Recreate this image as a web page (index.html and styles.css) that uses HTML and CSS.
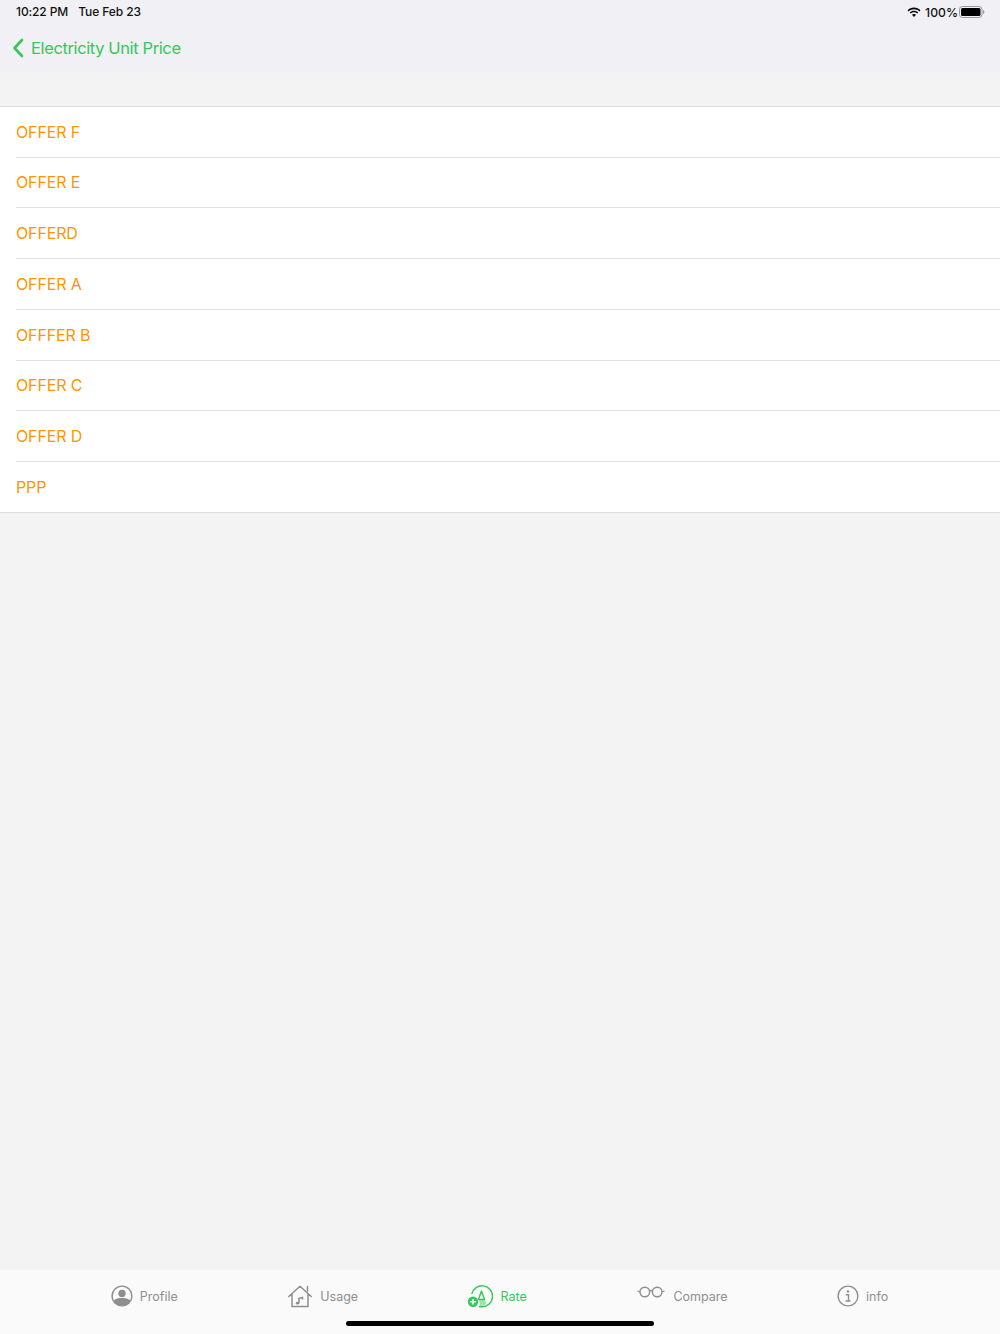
FILE: index.html
```html
<!DOCTYPE html>
<html lang="en">
<head>
<meta charset="utf-8">
<title>Electricity Unit Price</title>
<link rel="stylesheet" href="styles.css">
</head>
<body>
<div class="page">
  <header class="topbar">
    <div class="status">
      <div class="status-left"><span>10:22 PM</span><span>Tue Feb 23</span></div>
      <div class="status-right">
        <svg class="wifi" width="14" height="11" viewBox="0 0 14 11"><path d="M7 2.200c2.100 0 4 .8 5.400 2.200l1-1.100C11.700 1.500 9.400.5 7 .5S2.300 1.500.6 3.300l1 1.100C3 3 4.900 2.200 7 2.200z" fill="#000"/><path d="M7 5.300c1.200 0 2.300.5 3.200 1.300l1-1.100C10 4.300 8.600 3.700 7 3.700s-3 .6-4.200 1.800l1 1.100C4.700 5.800 5.800 5.300 7 5.300z" fill="#000"/><path d="M7 7c-.8 0-1.500.3-2 .8L7 10l2-2.200C8.500 7.300 7.800 7 7 7z" fill="#000"/></svg>
        <span class="battery-text">100%</span>
        <svg class="battery" width="26" height="12" viewBox="0 0 26 12"><rect x=".5" y=".5" width="22.500" height="11" rx="3" fill="none" stroke="#9a9a9c"/><rect x="2" y="2" width="19.500" height="8" rx="1.500" fill="#000"/><path d="M24 4v4c.8-.3 1.300-1.100 1.300-2s-.5-1.700-1.300-2z" fill="#9a9a9c"/></svg>
      </div>
    </div>
    <div class="nav">
      <svg class="chevron" width="12" height="20" viewBox="0 0 12 20"><path d="M10 2 2.500 10l7.500 8" fill="none" stroke="#34c759" stroke-width="2.600" stroke-linecap="round" stroke-linejoin="round"/></svg>
      <span class="nav-title">Electricity Unit Price</span>
    </div>
  </header>

  <main class="content">
    <ul class="list">
      <li class="row">OFFER F</li>
      <li class="row">OFFER E</li>
      <li class="row">OFFERD</li>
      <li class="row">OFFER A</li>
      <li class="row">OFFFER B</li>
      <li class="row">OFFER C</li>
      <li class="row">OFFER D</li>
      <li class="row">PPP</li>
    </ul>
  </main>

  <nav class="tabbar">
    <div class="tabs">
      <div class="tab tab-profile">
        <svg width="22" height="22" viewBox="0 0 22 22"><defs><clipPath id="pc"><circle cx="11" cy="11" r="9.800"/></clipPath></defs><circle cx="11" cy="8.500" r="3.700" fill="#8e8e90"/><path d="M2 22v-4.500c0-2.500 3.500-4.500 9-4.500s9 2 9 4.500V22z" fill="#8e8e90" clip-path="url(#pc)"/><circle cx="11" cy="11" r="9.900" fill="none" stroke="#8e8e90" stroke-width="1.400"/></svg>
        <span>Profile</span>
      </div>
      <div class="tab tab-wide">
        <svg width="24" height="24" viewBox="0 0 24 24"><path d="M.8 12.500 12 2.300l11.200 10.200M4 10v12.500h16V10M19.500 7V2.500" fill="none" stroke="#8e8e90" stroke-width="1.500" stroke-linejoin="round" stroke-linecap="round"/><path d="M11 19V14.300l3.500-.9v2.100" fill="none" stroke="#8e8e90" stroke-width="1.500"/><ellipse cx="9.500" cy="19.200" rx="1.700" ry="1.400" fill="#8e8e90"/></svg>
        <span>Usage</span>
      </div>
      <div class="tab tab-wide tab-active">
        <svg width="26" height="24" viewBox="0 0 26 24"><path d="M4.800 10A10.500 10.500 0 1 1 15 22.800h-3" fill="none" stroke="#34c759" stroke-width="1.400"/><path d="M11.500 15.500 14.500 7l3 8.500z" fill="none" stroke="#34c759" stroke-width="1.400" stroke-linejoin="round"/><path d="M12 15.500h6l1.500 4.500c-1.500 1.300-3.500 2-6.500 2z" fill="#34c759" opacity=".45"/><circle cx="6" cy="17.800" r="5.200" fill="#34c759"/><path d="M6 15v5.600M3.200 17.800h5.600" stroke="#fff" stroke-width="1.600"/></svg>
        <span>Rate</span>
      </div>
      <div class="tab tab-wide tab-compare">
        <svg width="28" height="12" viewBox="0 0 28 12"><circle cx="7.800" cy="6" r="4.800" fill="none" stroke="#8e8e90" stroke-width="1.400"/><circle cx="20.200" cy="6" r="4.800" fill="none" stroke="#8e8e90" stroke-width="1.400"/><path d="M12.500 5c1-.7 2-.7 3 0M3 6 .5 5M25 6l2.500-1" fill="none" stroke="#8e8e90" stroke-width="1.300"/></svg>
        <span>Compare</span>
      </div>
      <div class="tab">
        <svg width="22" height="22" viewBox="0 0 22 22"><circle cx="11" cy="11" r="9.900" fill="none" stroke="#8e8e90" stroke-width="1.400"/><circle cx="11" cy="6.500" r="1.200" fill="#8e8e90"/><path d="M8.800 9.700h2.700v6M8.500 16h5" fill="none" stroke="#8e8e90" stroke-width="1.400"/></svg>
        <span>info</span>
      </div>
    </div>
    <div class="home-indicator"></div>
  </nav>
</div>
</body>
</html>
```
FILE: styles.css
```css
* { box-sizing: border-box; }
html, body { margin: 0; padding: 0; }
body { font-family: Inter, "Liberation Sans", sans-serif; background: #f3f3f4; }
.page { width: 1000px; height: 1334px; display: flex; flex-direction: column; overflow: hidden; }

.topbar { height: 72px; background: #f1f1f5; display: flex; flex-direction: column; }
.status { height: 22px; padding: 0 15px 0 16px; display: flex; justify-content: space-between; align-items: center; font-size: 12px; font-weight: 500; color: #111; }
.status-left { display: flex; gap: 10px; letter-spacing: -0.1px; }
.status-right { display: flex; align-items: center; gap: 4px; font-size: 12.200px; }
.battery-text { margin-top: 2px; }
.wifi { margin-top: 3px; }
.battery { margin-left: -3px; margin-top: 2px; }
.nav { height: 50px; padding: 2px 0 0 12px; display: flex; align-items: center; gap: 7px; }
.nav-title { font-size: 16.500px; letter-spacing: -0.38px; color: #34c759; }

.content { flex: 1; padding-top: 33.750px; }
.list { list-style: none; margin: 0; padding: 0 0 0 16px; background: #fff; border-top: 1px solid #dcdcde; border-bottom: 1px solid #dcdcde; }
.row { height: 50.750px; display: flex; align-items: center; font-size: 16px; letter-spacing: -0.15px; color: #ff9500; border-bottom: 1px solid #e2e2e4; }
.row:last-child { border-bottom: 0; height: 50px; }

.tabbar { height: 64px; background: #fafafa; position: relative; }
.tabs { height: 52px; display: flex; justify-content: center; align-items: center; gap: 109.500px; }
.tab { display: flex; align-items: center; gap: 7px; font-size: 12.500px; color: #8e8e90; }
.tab-wide { gap: 8px; }
.tab-profile { margin: 0 1px 0 -1px; }
.tab-active { color: #34c759; margin: 0 1px 0 -1px; }
.tab-compare svg { margin-top: -8px; }
.home-indicator { position: absolute; left: 346px; bottom: 8px; width: 308px; height: 5px; border-radius: 3px; background: #000; }
```
